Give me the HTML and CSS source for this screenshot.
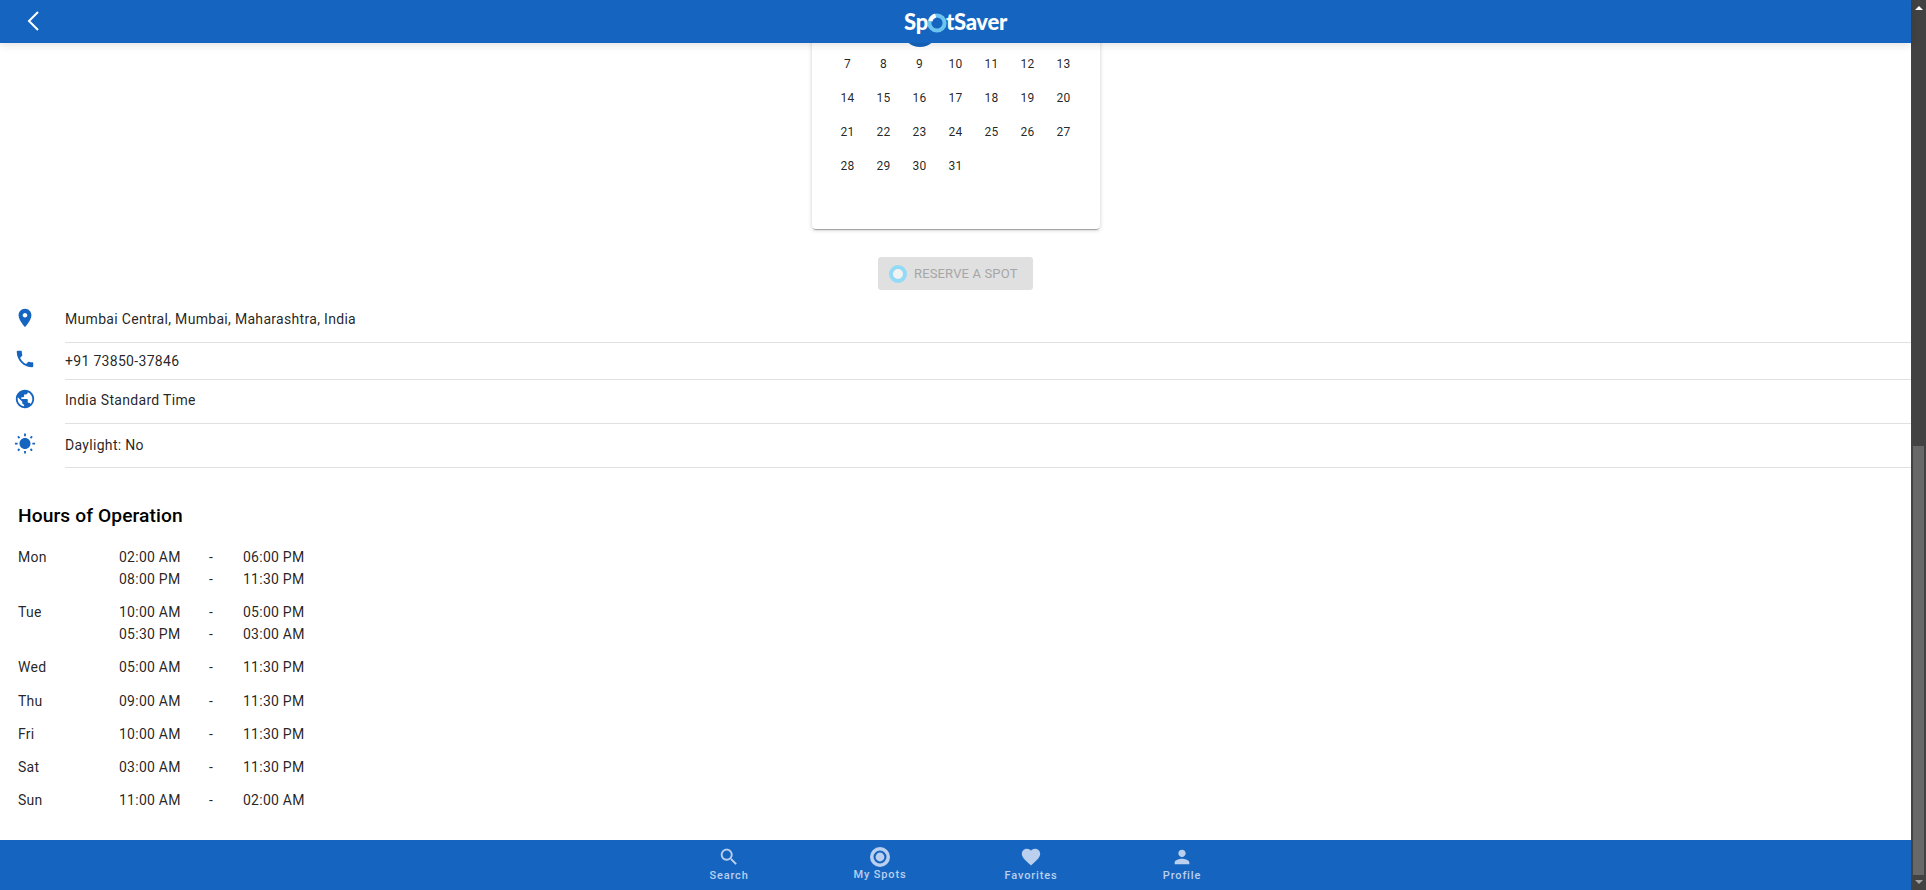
FILE: index.html
```html
<!DOCTYPE html>
<html lang="en">
<head>
<meta charset="utf-8">
<title>SpotSaver</title>
<link rel="stylesheet" href="styles.css">
</head>
<body>
<div class="app">
  <header class="topbar">
    <button class="back" aria-label="Back">
      <svg viewBox="0 0 14 22" width="14" height="22"><path d="M12 2 3 11l9 9" fill="none" stroke="#fff" stroke-width="2"/></svg>
    </button>
    <div class="logo">Sp<svg class="logo-o" viewBox="0 0 20 20" width="20" height="20"><circle cx="10" cy="10" r="7.6" fill="none" stroke="#6cc5ee" stroke-width="4"/><path d="M3.4 8.2A7.6 7.6 0 0 1 8.6 2.5" fill="none" stroke="#fff" stroke-width="4"/></svg>tSaver</div>
  </header>

  <main class="content">
    <section class="calendar">
      <div class="days">
        <span></span><span></span><span class="today"></span><span></span><span></span><span></span><span></span>
        <span>7</span><span>8</span><span>9</span><span>10</span><span>11</span><span>12</span><span>13</span>
        <span>14</span><span>15</span><span>16</span><span>17</span><span>18</span><span>19</span><span>20</span>
        <span>21</span><span>22</span><span>23</span><span>24</span><span>25</span><span>26</span><span>27</span>
        <span>28</span><span>29</span><span>30</span><span>31</span>
      </div>
    </section>

    <div class="reserve-wrap">
      <button class="reserve" disabled>
        <span class="spinner"></span>
        <span>RESERVE A SPOT</span>
      </button>
    </div>

    <ul class="info">
      <li class="info-row r1">
        <svg class="info-icon" viewBox="0 0 24 24"><path d="M12 2C8.13 2 5 5.13 5 9c0 5.25 7 13 7 13s7-7.75 7-13c0-3.87-3.13-7-7-7zm0 9.5c-1.38 0-2.5-1.12-2.5-2.5s1.12-2.5 2.5-2.5 2.5 1.12 2.5 2.5-1.12 2.5-2.5 2.5z"/></svg>
        <div class="info-text">Mumbai Central, Mumbai, Maharashtra, India</div>
      </li>
      <li class="info-row r2">
        <svg class="info-icon" viewBox="0 0 24 24"><path d="M6.62 10.79c1.44 2.83 3.76 5.14 6.59 6.59l2.2-2.2c.27-.27.67-.36 1.02-.24 1.12.37 2.33.57 3.57.57.55 0 1 .45 1 1V20c0 .55-.45 1-1 1-9.39 0-17-7.61-17-17 0-.55.45-1 1-1h3.5c.55 0 1 .45 1 1 0 1.25.2 2.45.57 3.57.11.35.03.74-.25 1.02l-2.2 2.2z"/></svg>
        <div class="info-text">+91 73850-37846</div>
      </li>
      <li class="info-row r3">
        <svg class="info-icon" viewBox="0 0 24 24"><path d="M12 2C6.48 2 2 6.48 2 12s4.48 10 10 10 10-4.48 10-10S17.52 2 12 2zm-1 17.93c-3.95-.49-7-3.85-7-7.93 0-.62.08-1.21.21-1.79L9 15v1c0 1.1.9 2 2 2v1.93zm6.9-2.54c-.26-.81-1-1.39-1.9-1.39h-1v-3c0-.55-.45-1-1-1H8v-2h2c.55 0 1-.45 1-1V7h2c1.1 0 2-.9 2-2v-.41c2.93 1.19 5 4.06 5 7.41 0 2.08-.8 3.97-2.1 5.39z"/></svg>
        <div class="info-text">India Standard Time</div>
      </li>
      <li class="info-row r4">
        <svg class="info-icon" viewBox="0 0 24 24"><path d="M6.76 4.84l-1.8-1.79-1.41 1.41 1.79 1.79 1.42-1.41zM4 10.5H1v2h3v-2zm9-9.95h-2V3.5h2V.55zm7.45 3.91l-1.41-1.41-1.79 1.79 1.41 1.41 1.79-1.79zm-3.21 13.7l1.79 1.8 1.41-1.41-1.8-1.79-1.4 1.4zM20 10.5v2h3v-2h-3zm-8-5c-3.31 0-6 2.69-6 6s2.69 6 6 6 6-2.69 6-6-2.69-6-6-6zm-1 16.95h2V19.5h-2v2.95zm-7.45-3.91l1.41 1.41 1.79-1.8-1.41-1.41-1.79 1.8z"/></svg>
        <div class="info-text">Daylight: No</div>
      </li>
    </ul>

    <section class="hours">
      <h2 class="hours-title">Hours of Operation</h2>
      <div class="hours-day"><span>Mon</span><span>02:00 AM</span><span>-</span><span>06:00 PM</span><span></span><span>08:00 PM</span><span>-</span><span>11:30 PM</span></div>
      <div class="hours-day"><span>Tue</span><span>10:00 AM</span><span>-</span><span>05:00 PM</span><span></span><span>05:30 PM</span><span>-</span><span>03:00 AM</span></div>
      <div class="hours-day"><span>Wed</span><span>05:00 AM</span><span>-</span><span>11:30 PM</span></div>
      <div class="hours-day"><span>Thu</span><span>09:00 AM</span><span>-</span><span>11:30 PM</span></div>
      <div class="hours-day"><span>Fri</span><span>10:00 AM</span><span>-</span><span>11:30 PM</span></div>
      <div class="hours-day"><span>Sat</span><span>03:00 AM</span><span>-</span><span>11:30 PM</span></div>
      <div class="hours-day"><span>Sun</span><span>11:00 AM</span><span>-</span><span>02:00 AM</span></div>
    </section>
  </main>

  <nav class="bottomnav">
    <a class="nav-item">
      <svg class="nav-icon" viewBox="0 0 24 24"><path d="M15.5 14h-.79l-.28-.27C15.41 12.59 16 11.11 16 9.5 16 5.91 13.09 3 9.5 3S3 5.91 3 9.5 5.91 16 9.5 16c1.61 0 3.09-.59 4.23-1.57l.27.28v.79l5 4.99L20.49 19l-4.99-5zm-6 0C7.01 14 5 11.99 5 9.5S7.01 5 9.5 5 14 7.01 14 9.5 11.99 14 9.5 14z"/></svg>
      <span>Search</span>
    </a>
    <a class="nav-item nav-spots">
      <svg class="nav-icon" viewBox="0 0 22 22"><path fill-rule="evenodd" d="M11 1a10 10 0 1 0 0 20 10 10 0 0 0 0-20zm0 3.5a6.5 6.5 0 1 1 0 13 6.5 6.5 0 0 1 0-13z"/><circle cx="11" cy="11" r="4.4"/></svg>
      <span>My Spots</span>
    </a>
    <a class="nav-item">
      <svg class="nav-icon" viewBox="0 0 24 24"><path d="M12 21.35l-1.45-1.32C5.4 15.36 2 12.28 2 8.5 2 5.42 4.42 3 7.5 3c1.74 0 3.41.81 4.5 2.09C13.09 3.81 14.76 3 16.5 3 19.58 3 22 5.42 22 8.5c0 3.78-3.4 6.86-8.55 11.54L12 21.35z"/></svg>
      <span>Favorites</span>
    </a>
    <a class="nav-item">
      <svg class="nav-icon" viewBox="0 0 24 24"><path d="M12 12c2.21 0 4-1.79 4-4s-1.79-4-4-4-4 1.79-4 4 1.79 4 4 4zm0 2c-2.67 0-8 1.34-8 4v2h16v-2c0-2.66-5.33-4-8-4z"/></svg>
      <span>Profile</span>
    </a>
  </nav>
</div>

<div class="scrollbar">
  <span class="arrow-up"></span>
  <span class="thumb"></span>
  <span class="arrow-down"></span>
</div>
</body>
</html>
```

FILE: styles.css
```css
* { box-sizing: border-box; }

html, body {
  height: 100%;
  margin: 0;
  overflow: hidden;
}

body {
  display: flex;
  font-family: Roboto, "Liberation Sans", sans-serif;
  font-size: 14px;
  color: rgba(0, 0, 0, 0.87);
  background: #fff;
}

.app {
  flex: 1;
  min-width: 0;
  display: flex;
  flex-direction: column;
}

/* Header */
.topbar {
  position: relative;
  z-index: 2;
  flex: none;
  height: 43px;
  display: flex;
  align-items: center;
  justify-content: center;
  background: #1565c0;
  box-shadow: 0 2px 8px rgba(0, 0, 0, 0.12);
}

.back {
  position: absolute;
  left: 26px;
  top: 10px;
  width: 14px;
  height: 22px;
  padding: 0;
  border: 0;
  background: none;
  display: flex;
}

.logo {
  display: flex;
  align-items: center;
  font-family: Lato, sans-serif;
  font-weight: 900;
  font-size: 22px;
  letter-spacing: -0.3px;
  color: #fff;
  line-height: 1;
}

.logo-o {
  margin: 3px -1px 0;
}

/* Calendar */
.content {
  flex: none;
  height: 797px;
  overflow: hidden;
}

.calendar {
  width: 288px;
  margin: -30px auto 0;
  padding-bottom: 46px;
  background: #fff;
  border-radius: 4px;
  box-shadow: 0 2px 1px -1px rgba(0, 0, 0, 0.3), 0 1px 4px rgba(0, 0, 0, 0.2);
}

.days {
  display: grid;
  grid-template-columns: repeat(7, 36px);
  grid-auto-rows: 34px;
  padding-left: 18px;
  font-size: 12px;
  letter-spacing: 0.2px;
}

.days span {
  display: flex;
  align-items: center;
  justify-content: center;
}

.days .today {
  width: 36px;
  height: 36px;
  margin-top: -2px;
  border-radius: 50%;
  background: #1565c0;
}

/* Reserve */
.reserve-wrap {
  display: flex;
  justify-content: center;
  padding-top: 28px;
}

.reserve {
  width: 155px;
  height: 33px;
  display: flex;
  align-items: center;
  gap: 7px;
  padding: 0 0 0 11px;
  border: 0;
  border-radius: 3px;
  background: #e0e0e0;
  color: #a6a6a6;
  font: 400 13px Roboto, sans-serif;
  letter-spacing: 0.15px;
}

.spinner {
  width: 18px;
  height: 18px;
  border-radius: 50%;
  border: 4px solid #92daf6;
  background: #f2f2f2;
}

/* Info rows */
.info {
  list-style: none;
  margin: 0;
  padding: 0;
}

.info-row {
  display: flex;
  align-items: flex-start;
}

.info-icon {
  flex: none;
  width: 22px;
  height: 22px;
  margin: 0 29px 0 14px;
  fill: #1565c0;
}

.info-text {
  flex: 1;
  line-height: 20px;
  letter-spacing: 0.31px;
  border-bottom: 1px solid #e0e0e0;
}

.r1 { padding-top: 19px; }
.r1 .info-text { padding-bottom: 13px; }
.r1 .info-icon { margin-top: -2px; }

.r2 .info-text { padding: 8px 0; }
.r2 .info-icon { margin-top: 5px; }

.r3 .info-text { padding: 10px 0 13px; }
.r3 .info-icon { margin-top: 8px; }

.r4 .info-text { padding: 11px 0 12px; }
.r4 .info-icon { margin-top: 9px; }

/* Hours */
.hours {
  padding: 0 18px;
}

.hours-title {
  margin: 37px 0 19px;
  font-size: 19.2px;
  font-weight: 500;
  letter-spacing: 0.1px;
  line-height: 22px;
  color: #000;
}

.hours-day {
  display: grid;
  grid-template-columns: 101px 90px 34px auto;
  justify-content: start;
  line-height: 22px;
  letter-spacing: 0.25px;
  margin-bottom: 11.2px;
}

/* Bottom nav */
.bottomnav {
  flex: none;
  height: 50px;
  display: flex;
  justify-content: center;
  background: #1565c0;
}

.nav-item {
  width: 151px;
  padding-top: 6px;
  display: flex;
  flex-direction: column;
  align-items: center;
  color: #bad0ee;
  font-size: 11px;
  font-weight: 500;
  letter-spacing: 0.85px;
  line-height: 14px;
}

.nav-item span {
  margin-top: 1px;
}

.nav-icon {
  width: 22px;
  height: 22px;
  fill: currentColor;
}

.nav-item.nav-spots span {
  margin-top: 0;
}

/* Scrollbar */
.scrollbar {
  flex: none;
  width: 15px;
  height: 100%;
  display: flex;
  flex-direction: column;
  align-items: center;
  background: #424242;
}

.arrow-up {
  flex: none;
  margin-top: 6px;
  border: 4px solid transparent;
  border-top: 0;
  border-bottom: 4px solid #fff;
}

.thumb {
  flex: none;
  width: 11px;
  height: 429px;
  margin-top: 436px;
  background: #686868;
}

.arrow-down {
  flex: none;
  margin-top: 5px;
  border: 4px solid transparent;
  border-bottom: 0;
  border-top: 4px solid #a3a3a3;
}
```
